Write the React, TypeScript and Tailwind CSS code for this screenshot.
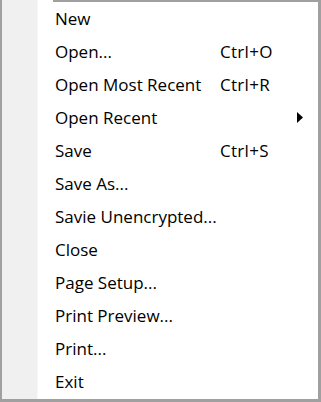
import React from "react";

type Item = { label: string; shortcut?: string; submenu?: boolean };

const items: Item[] = [
  { label: "New" },
  { label: "Open...", shortcut: "Ctrl+O" },
  { label: "Open Most Recent", shortcut: "Ctrl+R" },
  { label: "Open Recent", submenu: true },
  { label: "Save", shortcut: "Ctrl+S" },
  { label: "Save As..." },
  { label: "Savie Unencrypted..." },
  { label: "Close" },
  { label: "Page Setup..." },
  { label: "Print Preview..." },
  { label: "Print..." },
  { label: "Exit" },
];

export default function App() {
  return (
    <div
      className="relative flex w-[321px] h-[402px] bg-white border-l-2 border-r-[3px] border-b-[3px] border-[#a0a0a0] text-[#000] text-[17px]"
      style={{ fontFamily: '"Open Sans", "Noto Sans", sans-serif' }}
    >
      <div className="absolute left-[51px] right-0 top-0 h-[2px] bg-[#a0a0a0]" />
      <div className="w-[35px] shrink-0 bg-[#f0f0f0]" />
      <div className="w-px shrink-0 bg-[#f8f8f8]" />
      <div className="flex flex-col flex-1 pt-[2px] pl-[17px]">
        {items.map((it) => (
          <div key={it.label} className="flex items-center h-[33px] shrink-0">
            <span className="w-[165px] whitespace-nowrap">{it.label}</span>
            <span className="w-[53px] whitespace-nowrap tracking-[0.3px]">{it.shortcut ?? ""}</span>
            {it.submenu && (
              <svg width="6" height="11" viewBox="0 0 6 11" className="ml-[24px]">
                <path d="M0 0 L6 5.5 L0 11 Z" fill="#000" />
              </svg>
            )}
          </div>
        ))}
      </div>
    </div>
  );
}
